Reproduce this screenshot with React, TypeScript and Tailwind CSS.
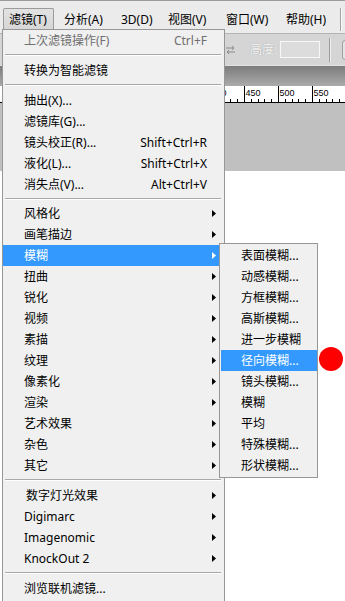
import clsx from 'clsx'

type Entry =
  | { kind: 'item'; label: string; shortcut?: string; sub?: boolean; disabled?: boolean; active?: boolean; indent?: boolean }
  | { kind: 'sep'; h: 8 | 9 }

const item = (label: string, extra: Partial<Extract<Entry, { kind: 'item' }>> = {}): Entry => ({ kind: 'item', label, ...extra })
const sep = (h: 8 | 9 = 9): Entry => ({ kind: 'sep', h })

const FILTER_MENU: Entry[] = [
  item('上次滤镜操作(F)', { shortcut: 'Ctrl+F', disabled: true }),
  sep(),
  item('转换为智能滤镜'),
  sep(),
  item('抽出(X)...'),
  item('滤镜库(G)...'),
  item('镜头校正(R)...', { shortcut: 'Shift+Ctrl+R' }),
  item('液化(L)...', { shortcut: 'Shift+Ctrl+X' }),
  item('消失点(V)...', { shortcut: 'Alt+Ctrl+V' }),
  sep(8),
  item('风格化', { sub: true }),
  item('画笔描边', { sub: true }),
  item('模糊', { sub: true, active: true }),
  item('扭曲', { sub: true }),
  item('锐化', { sub: true }),
  item('视频', { sub: true }),
  item('素描', { sub: true }),
  item('纹理', { sub: true }),
  item('像素化', { sub: true }),
  item('渲染', { sub: true }),
  item('艺术效果', { sub: true }),
  item('杂色', { sub: true }),
  item('其它', { sub: true }),
  sep(),
  item('数字灯光效果', { sub: true, indent: true }),
  item('Digimarc', { sub: true }),
  item('Imagenomic', { sub: true }),
  item('KnockOut 2', { sub: true }),
  sep(),
  item('浏览联机滤镜...'),
]

const BLUR_MENU = [
  '表面模糊...',
  '动感模糊...',
  '方框模糊...',
  '高斯模糊...',
  '进一步模糊',
  '径向模糊...',
  '镜头模糊...',
  '模糊',
  '平均',
  '特殊模糊...',
  '形状模糊...',
]

const MENU_BAR = [
  { label: '分析(A)', w: 'w-[58px] pl-[10px]' },
  { label: '3D(D)', w: 'w-[46px] pl-[9px]' },
  { label: '视图(V)', w: 'w-[58px] pl-[10px]' },
  { label: '窗口(W)', w: 'w-[60px] pl-[10px]' },
  { label: '帮助(H)', w: 'w-[60px] pl-[10px]' },
]

function Arrow({ className }: { className?: string }) {
  return (
    <svg width="4" height="7" viewBox="0 0 4 7" className={className}>
      <polygon points="0,0 4,3.5 0,7" fill="currentColor" />
    </svg>
  )
}

function Ruler() {
  const majors = [
    { x: 210, n: '400' },
    { x: 244, n: '450' },
    { x: 278, n: '500' },
    { x: 312, n: '550' },
  ]
  return (
    <svg width="345" height="17" className="block bg-white">
      {majors.map((m) => (
        <g key={m.n}>
          <line x1={m.x + 0.5} y1="0" x2={m.x + 0.5} y2="16" stroke="#000" />
          <text x={m.x + 1.5} y="10" fontSize="9" fontFamily="'Liberation Sans', sans-serif" fill="#000">
            {m.n}
          </text>
          {[1, 2, 3, 4].map((k) => (
            <line
              key={k}
              x1={Math.round(m.x + k * 6.75) + 0.5}
              y1="13"
              x2={Math.round(m.x + k * 6.75) + 0.5}
              y2="16"
              stroke="#000"
            />
          ))}
        </g>
      ))}
      <line x1="345.5" y1="0" x2="345.5" y2="16" stroke="#000" />
      <line x1="0" y1="16.5" x2="345" y2="16.5" stroke="#000" />
    </svg>
  )
}

export default function App() {
  return (
    <div className="relative w-[345px] h-[601px] overflow-hidden bg-white text-[12px] text-black font-['Noto_Sans','Noto_Sans_CJK_SC',sans-serif]">
      {/* menu bar */}
      <div className="flex h-[33px] items-start pt-[7px] pl-[3px] bg-[#ebebeb] border-t border-[#9a9a9a]">
        <div className="w-[51px] h-[23px] pl-[5px] leading-[22px] rounded-t-[2px] border border-b-0 border-[#9b9b9b] bg-gradient-to-b from-[#e2e2e2] to-[#d6d6d6]">
          滤镜(T)
        </div>
        {MENU_BAR.map((m) => (
          <div key={m.label} className={clsx('h-[23px] leading-[23px] whitespace-nowrap shrink-0', m.w)}>
            {m.label}
          </div>
        ))}
        <div className="ml-[4px] h-[23px] w-[2px] shrink-0 border-l border-[#a3a3a3] bg-white/70" />
      </div>

      {/* options bar */}
      <div className="flex h-[33px] items-center overflow-hidden bg-[#d5d5d5] border-t border-[#b4b4b4] border-b border-b-[#e2e2e2]">
        <div className="w-[225px] shrink-0" />
        <svg width="11" height="10" viewBox="0 0 11 10" className="mt-[1px] shrink-0">
          <path d="M1 3h8M7 1l2 2-2 2M10 7H2M4 5L2 7l2 2" stroke="#8a8a8a" strokeWidth="1" fill="none" />
        </svg>
        <span className="ml-[14px] shrink-0 whitespace-nowrap text-[#f6f6f6] [text-shadow:0_0_1px_#8f8f8f]">高度:</span>
        <div className="ml-[3px] w-[40px] h-[17px] shrink-0 border border-[#f7f7f7] bg-[#dcdcdc]" />
        <div className="ml-[9px] w-[2px] h-[24px] shrink-0 border-l border-[#9c9c9c] bg-[#eeeeee]" />
        <div className="ml-[11px] w-[20px] h-[20px] shrink-0 rounded-[3px] border border-[#a0a0a0] bg-[#e4e4e4]" />
      </div>

      {/* document tab strip */}
      <div className="h-[20px] bg-gradient-to-b from-[#7c7c7c] to-[#ababab]" />
      <Ruler />
      <div className="h-[68px] bg-[#c0c0c0]" />

      {/* filter dropdown */}
      <div className="absolute left-[2px] top-[29px] w-[223px] pb-[4px] border border-[#979797] bg-[#f0f0f0]">
        {FILTER_MENU.map((e, i) =>
          e.kind === 'sep' ? (
            <div key={i} className={clsx(e.h === 9 ? 'h-[9px]' : 'h-[8px]', 'pt-[3px] pl-[2px] pr-[3px]')}>
              <div className="h-[2px] border-t border-[#a9a9a9] border-b border-b-white" />
            </div>
          ) : (
            <div
              key={i}
              className={clsx(
                'flex h-[21px] items-center',
                e.indent ? 'pl-[23px]' : 'pl-[21px]',
                e.active && 'bg-[#3399ff] text-white',
                e.disabled && 'text-[#6f6f6f]'
              )}
            >
              <span className="flex-1 whitespace-nowrap">{e.label}</span>
              {e.shortcut && <span className="mr-[17px] whitespace-nowrap">{e.shortcut}</span>}
              {e.sub && <Arrow className="mr-[8px]" />}
            </div>
          )
        )}
      </div>

      {/* blur submenu */}
      <div className="absolute left-[219px] top-[243px] w-[99px] py-[1px] border border-[#979797] bg-[#f0f0f0]">
        {BLUR_MENU.map((label) => (
          <div
            key={label}
            className={clsx(
              'ml-[1px] flex h-[21px] items-center pl-[20px] whitespace-nowrap',
              label === '径向模糊...' && 'bg-[#3399ff] text-white'
            )}
          >
            {label}
          </div>
        ))}
      </div>

      {/* annotation */}
      <div className="absolute left-[319px] top-[347px] w-[24px] h-[24px] rounded-full bg-[#ff0000]" />
    </div>
  )
}
